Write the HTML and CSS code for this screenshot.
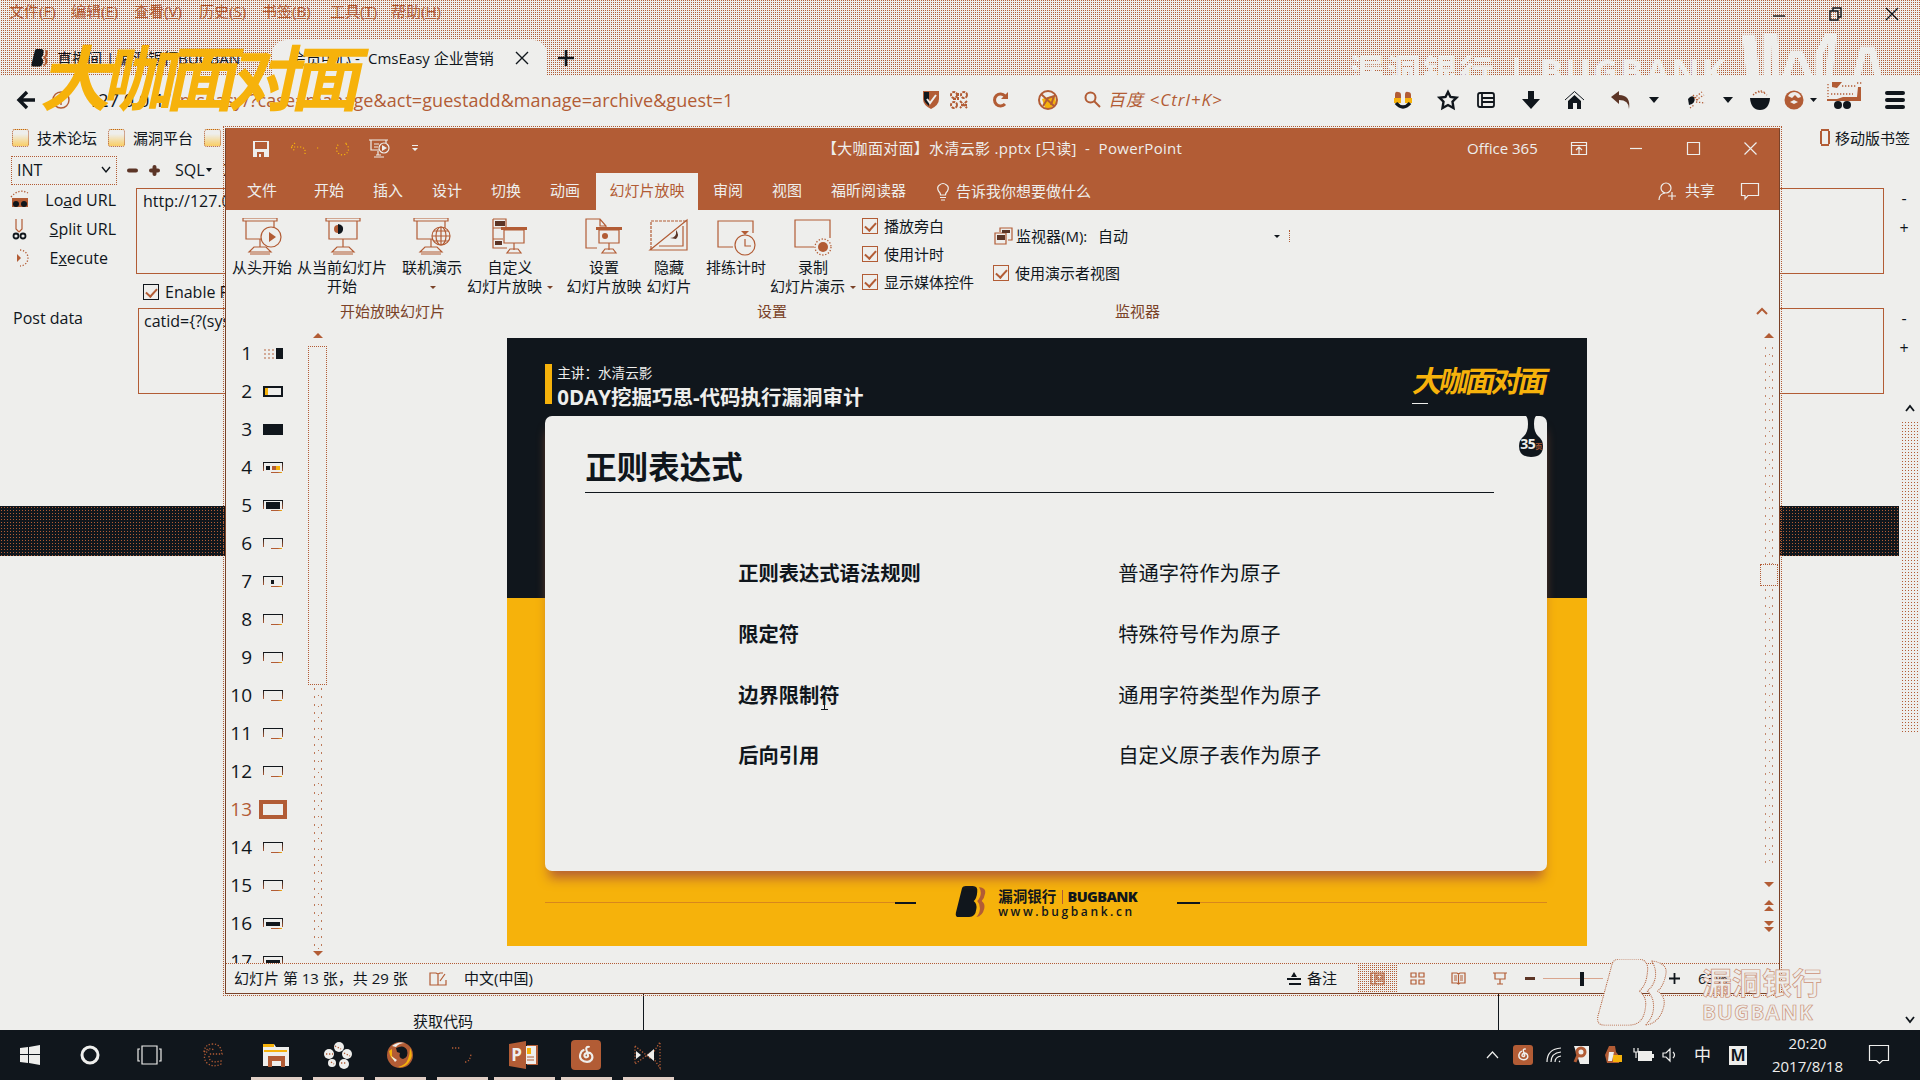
FILE: index.html
```html
<!DOCTYPE html>
<html lang="zh-CN">
<head>
<meta charset="utf-8">
<title>Desktop</title>
<link rel="stylesheet" href="styles.css">
</head>
<body>
<svg width="0" height="0" class="defs">
  <defs>
    <symbol id="board" viewBox="0 0 40 38"><path d="M1 0h34v3H1zM4 3v18h28V3M18 21v8M12 29h12l5 5H7zM8 36h20"/></symbol>
    <symbol id="clef" viewBox="0 0 20 20"><path d="M13 3c-2-1-4 0-3 3l1.500 5c.5 2-3.500 2.500-3.500 0 0-3 5-4 7-1 2 4-1 7-4.500 7C6 17 3 14 4 10c.5-2 2-4 4-4.500"/></symbol>
    <symbol id="bug" viewBox="0 0 36 36"><path class="front" d="M8 2q1-2 4-2h8q6 0 5 7-.5 7-4 10 4 3 3 9-1 9-8 9H4q-4 0-3-5z"/><path class="back" d="M27 1q8 1 7 7-1 6-4 9 4 3 3 8-2 9-9 10 4-4 4-10 0-5-3-8 4-4 4-9 0-4-2-7z"/></symbol>
  </defs>
</svg>

<main class="browser">
  <header class="chrome dither">
    <div class="menu"><span>文件(<u>F</u>)</span><span>编辑(<u>E</u>)</span><span>查看(<u>V</u>)</span><span>历史(<u>S</u>)</span><span>书签(<u>B</u>)</span><span>工具(<u>T</u>)</span><span>帮助(<u>H</u>)</span>
      <svg class="ln dark" width="14" height="14"><path d="M1 9h12"/></svg>
      <svg class="ln dark" width="14" height="14"><path d="M1 4h8v9H1zM4 4V1h8v9H9"/></svg>
      <svg class="ln dark" width="14" height="14"><path d="M1 1l12 12M13 1L1 13"/></svg>
    </div>
    <div class="browser-tabs">
      <div class="btab first"><svg class="bug" width="20" height="18"><use href="#bug"/></svg><span>直播间 | 漏洞银行BUGBAN</span></div>
      <div class="btab current"><span class="t1">会员中心 -</span><span class="t2">CmsEasy 企业营销</span><svg class="ln dark" width="14" height="14"><path d="M1 1l12 12M13 1L1 13"/></svg></div>
      <svg class="plus" width="16" height="16"><path d="M8 0v16M0 8h16"/></svg>
    </div>
  </header>

  <nav class="nav">
    <svg width="18" height="18"><path class="thick" d="M18 9H3M10 1L2 9l8 8"/></svg>
    <svg class="ln rust" width="20" height="20"><circle cx="10" cy="10" r="8"/><path d="M10 8v7M10 4v2"/></svg>
    <span class="url"><b>127.0.0.1</b>/cmseasy/?case=manage&amp;act=guestadd&amp;manage=archive&amp;guest=1</span>
    <svg width="18" height="18"><path class="frust" d="M1 0h16v8q0 6-8 10Q1 14 1 8z"/><path class="fdark" d="M2 1h5v14Q2 11 2 8z"/><path class="wt" d="M5 8l3 4 6-8"/></svg>
    <svg class="qr rust" width="18" height="18"><circle cx="4" cy="4" r="3"/><circle cx="14" cy="4" r="3"/><circle cx="4" cy="14" r="3"/><path d="M10 10l7 7M17 10l-7 7M8 2v6H2M11 14h6"/></svg>
    <svg width="16" height="16"><path class="rthick" d="M12 12a6 6 0 1 1 0-8"/><path class="frust" d="M15 0v7H8z"/></svg>
    <svg width="20" height="20"><circle class="bg" cx="10" cy="10" r="8"/><path class="fyel" d="M4 9l6-2 7-1 1 7-5 5H7z"/><circle class="r2" cx="10" cy="10" r="9"/><path class="r2" d="M3 4l13 12M5 16l5-8 6-2-3 9"/></svg>
    <svg class="r2" width="17" height="17"><circle cx="6.500" cy="6.500" r="5"/><path d="M10 10l6 6"/></svg>
    <i class="search">百度 &lt;Ctrl+K&gt;</i>
    <svg width="18" height="18"><path class="frust" d="M1 9V4q0-4 3-3 3 0 3 3v5M11 9V4q0-4 3-3 3 0 3 3v5"/><path class="fyel" d="M0 7h7v5H0zM11 7h7v5h-7z"/><path class="thick" d="M2 12q7 8 14 0"/></svg>
    <svg width="20" height="20"><path class="star" d="M10 2l2.500 5 6 .7-4 4 1 6.300-5.500-3-5.500 3 1-6.300-4-4 6-.7z"/></svg>
    <svg class="d2" width="18" height="18"><path d="M3 2h12q2 0 2 2v10q0 2-2 2H3q-2 0-2-2V4q0-2 2-2zM5 2v14M5 7h12M5 11h12"/></svg>
    <svg width="18" height="18"><path class="fdark" d="M6 0h6v8h6l-9 10L0 8h6z"/></svg>
    <svg width="19" height="18"><path class="d1" d="M0 9l9.500-8.500L19 9"/><path class="fdark" d="M3 10l6.500-6L16 10v8h-4v-6H8v6H3z"/></svg>
    <svg width="20" height="18"><path class="fmix" d="M0 6l8-6v4q12 0 10 14 0-9-10-9v4z"/></svg>
    <svg width="10" height="6"><path class="fdark" d="M0 0h10L5 6z"/></svg>
    <svg width="18" height="18"><path class="fdark" d="M1 8q3-4 6-2 2 4-2 7l-3 1z"/><path class="rdot" d="M7 7l8-6M9 9l8-5M9 11l9 1M3 17l4-3M6 4l5 5"/></svg>
    <svg width="10" height="6"><path class="fdark" d="M0 0h10L5 6z"/></svg>
    <svg width="20" height="20"><path class="fdark" d="M0 8h20q-1 12-10 12Q1 20 0 8z"/><path class="rdot" d="M3 5q7-6 14 0M5 3q6-4 10 0"/></svg>
    <svg width="20" height="20"><circle class="frust" cx="10" cy="10" r="9.500"/><path class="flight" d="M4 6q2-4 7-4 5 1 6 5l-3 1-3-3-3 3zM6 12l4-2 4 2-4 2z"/></svg>
    <svg class="small-caret" width="7" height="4"><path class="fdark" d="M0 0h7L3.500 4z"/></svg>
    <svg class="cart" width="36" height="26"><path class="frust" d="M0 17h10l6-2h14l1-10h3v14H0zM5 0h10l-5 6-5-1z"/><path class="rdot" d="M1 2v13M4 12h22M15 4h14M30 1h5"/><circle class="fdark" cx="11" cy="23" r="4"/><circle class="fdark" cx="20" cy="23" r="4"/></svg>
    <svg width="20" height="18"><path class="burger" d="M2 2h16M2 9h16M2 16h16"/></svg>
  </nav>

  <div class="bookmarks">
    <i class="folder"></i><span>技术论坛</span><i class="folder"></i><span>漏洞平台</span><i class="folder"></i>
    <svg class="phone" width="10" height="17"><path d="M1 1h8M1 16h8M1 2v13M9 2v13"/></svg><span>移动版书签</span>
  </div>

  <section class="hackbar">
    <div class="hack-tools"><div class="select"><span>INT</span><svg class="ln dark" width="10" height="6"><path d="M1 0l4 5 4-5"/></svg></div>
      <svg width="11" height="5"><path class="pill" d="M2 2.500h7"/></svg><svg width="11" height="11"><path class="pill" d="M2 5.500h7M5.500 2v7"/></svg><span>SQL</span><svg width="6" height="4"><path class="fdark" d="M0 0h6L3 4z"/></svg><span>X</span></div>
    <div class="hack-row">
      <div class="actions">
        <div class="action"><svg width="20" height="20"><path class="frust" d="M2 8h16v9H2z"/><path class="rdot" d="M1 7q8-9 17-4M2 10h16"/><circle class="fdark" cx="6" cy="14" r="3"/><circle class="fdark" cx="14" cy="14" r="3"/></svg><span>Lo<u>a</u>d URL</span></div>
        <div class="action"><svg width="20" height="22"><path class="r1" d="M6 1v10l3 3M12 1v10l-3 3"/><circle class="d2" cx="6" cy="18" r="2.500"/><circle class="d2" cx="13" cy="18" r="2.500"/></svg><span><u>S</u>plit URL</span></div>
        <div class="action"><svg width="20" height="18"><path class="frust" d="M7 5l4 4-4 4z"/><path class="rdot" d="M10 1a8 8 0 0 1 0 16"/></svg><span class="ex">E<u>x</u>ecute</span></div>
      </div>
      <div class="box">http://127.0.0.1</div>
      <div class="pm"><span>-</span><span>+</span></div>
    </div>
    <div class="enable"><i class="check"></i><span>Enable Post data</span></div>
    <div class="hack-row second">
      <div class="actions post">Post data</div>
      <div class="box">catid={?(system</div>
      <div class="pm"><span>-</span><span>+</span></div>
    </div>
  </section>

  <div class="page">
    <div class="page-body">
      <div class="banner"></div>
      <div class="page-foot"><span>获取代码</span><i></i></div>
    </div>
    <div class="page-scroll"><svg width="10" height="8"><path class="d2" d="M1 7l4-5 4 5"/></svg><i></i><svg width="10" height="8"><path class="d2" d="M1 1l4 5 4-5"/></svg></div>
  </div>
</main>

<div class="mark-top"><span>漏洞银行 | BUGBANK</span><svg width="150" height="42"><path d="M5 42L1 4h6l4 38M22 42V0h7l2 42M41 42l7-22h7l9 22M74 42V20l9-18h5l-4 40M112 42l6-26h9l6 26"/></svg></div>

<section class="ppt">
  <div class="titlebar">
    <svg width="16" height="16"><path class="flight" fill-rule="evenodd" d="M0 0h16v16H0zM2 1v7h12V1zM4 11v5h2v-3h2v3h3v-5z"/></svg>
    <svg class="ydot" width="17" height="14"><path d="M1 5h10q5 1 4 7M5 1L1 5l4 4"/></svg>
    <svg class="ydot" width="4" height="3"><path d="M0 1h3"/></svg>
    <svg class="ydot" width="15" height="16"><path d="M11 3a6 6 0 1 1-7 0M11 3V0"/></svg>
    <svg class="l1" width="21" height="19"><path d="M0 1h19M2 1v10h8M17 1v3M5 5h5M5 8h4M9 12v4M5 18h10M7 16h5"/><circle cx="15" cy="9" r="5"/><path class="flight" d="M13 6l5 3-5 3z"/></svg>
    <svg width="6" height="7"><path class="flight" d="M0 0h6v1H0zM0 3h6L3 6z"/></svg>
    <span class="doc">【大咖面对面】水清云影 .pptx [只读]&nbsp; -&nbsp; PowerPoint</span>
    <span class="office">Office 365</span>
    <svg class="l1" width="16" height="13"><path d="M.5.5h15v12H.5zM1 3.500h15M8 12V5M5 8l3-3 3 3"/></svg>
    <svg class="l1" width="13" height="13"><path d="M0 6.500h12"/></svg>
    <svg class="l1" width="13" height="13"><path d="M.5.5h12v12H.5z"/></svg>
    <svg class="l1" width="13" height="13"><path d="M.5.5l12 12M12.500.5l-12 12"/></svg>
  </div>
  <div class="ribbon-tabs">
    <span>文件</span><span>开始</span><span>插入</span><span>设计</span><span>切换</span><span>动画</span><span class="on">幻灯片放映</span><span>审阅</span><span>视图</span><span>福昕阅读器</span>
    <svg class="l1" width="12" height="18"><path d="M3.500 12q0-2-2-4-2-4 1-6 3.500-3 7 0 3 2 1 6-2 2-2 4zM3 14.500h6M4 17h4"/></svg>
    <span class="tell">告诉我你想要做什么</span>
    <svg class="l1" width="19" height="19"><circle cx="8" cy="6" r="5"/><path d="M1 18q0-6 6-7M14 10v8M10 14h8"/></svg>
    <span>共享</span>
    <svg class="l1" width="18" height="17"><path d="M.5.5h17v12H7L4 16v-3.500H.5z"/></svg>
  </div>

  <div class="ribbon">
    <div class="rb b1"><svg class="r1" width="40" height="38"><use href="#board"/><circle class="bg" cx="29" cy="19" r="10"/><path class="frust" d="M27 14l7 5-7 5z"/></svg><span>从头开始</span></div>
    <div class="rb b2"><svg class="r1" width="34" height="38"><use href="#board" width="40" height="38"/><circle class="frust" cx="13" cy="11" r="4"/><path class="fdark" d="M13 11V6q6 1 5 6-1 4-5 4z"/></svg><span>从当前幻灯片</span><span>开始</span></div>
    <div class="rb b3"><svg class="r1" width="38" height="38"><use href="#board" width="40" height="38"/><circle class="bg" cx="28" cy="18" r="9"/><path d="M19 18h18M28 9v18M21 13h14M21 23h14"/><ellipse cx="28" cy="18" rx="5" ry="9"/></svg><span>联机演示</span><span><i class="caret"></i></span></div>
    <div class="rb b4"><svg class="r1" width="36" height="38"><path d="M1 1h13v8M1 1v29h14M1 10h8M1 21h10"/><path class="fmix" d="M3 3h10v5H3zM3 23h7v4H3z"/><path class="frust" d="M9 9h26v3H9z"/><path class="bg" d="M12 12h20v13H12z"/><path d="M22 25v7M15 35h14l-3-4h-8z"/></svg><span>自定义</span><span>幻灯片放映 <i class="caret"></i></span></div>
    <div class="rb b5"><svg class="r1" width="38" height="38"><path d="M12 30H1V1h14l6 7v2M15 1v7h6"/><path class="frust" d="M11 9h26v3H11z"/><path class="bg" d="M14 12h20v13H14z"/><circle class="frust" cx="20" cy="18" r="3"/><path d="M24 25v7M17 35h14l-3-4h-8z"/></svg><span>设置</span><span>幻灯片放映</span></div>
    <div class="rb b6"><svg class="r1" width="38" height="38"><path stroke-dasharray="3 1" d="M1 31V3h36"/><path d="M0 32L37 2v30zM9 28h24V8"/><path class="fmix" d="M20 20q7 0 6-8 4 5 0 9z"/></svg><span>隐藏</span><span>幻灯片</span></div>
    <div class="rb b7"><svg class="r1" width="38" height="38"><path d="M16 29H1V3h35v12"/><circle class="bg" cx="28" cy="27" r="10"/><path d="M28 21v7h6"/><path class="frust" d="M24 13h8l-4 4z"/></svg><span>排练计时</span></div>
    <div class="rb b8"><svg class="r1" width="38" height="38"><path d="M20 29H1V2h35v18"/><circle class="rdot" cx="29" cy="29" r="8"/><circle class="frust" cx="29" cy="29" r="5"/></svg><span>录制</span><span>幻灯片演示 <i class="caret"></i></span></div>
    <div class="checks"><label><i class="check r"></i>播放旁白</label><label><i class="check r"></i>使用计时</label><label><i class="check r"></i>显示媒体控件</label></div>
    <div class="monitors"><div><svg class="r1" width="19" height="18"><path d="M6 5V1h12v12h-4M1 6h11v11H1z"/><path class="fmix" d="M3 8h8v5H3zM8 3h8v3H8z"/></svg><span class="ml">监视器(M):</span><span class="auto">自动</span><i class="caret k"></i><em></em></div><label><i class="check r"></i>使用演示者视图</label></div>
    <div class="groups"><span>开始放映幻灯片</span><span>设置</span><span>监视器</span><svg class="r2" width="12" height="8"><path d="M1 7l5-5 5 5"/></svg></div>
  </div>

  <div class="work">
    <ol class="thumbs">
      <li>1<i class="th a"></i></li><li>2<i class="th b"></i></li><li>3<i class="th c"></i></li><li>4<i class="th d"></i></li><li>5<i class="th e"></i></li><li>6<i class="th"></i></li><li>7<i class="th g"></i></li><li>8<i class="th"></i></li><li>9<i class="th"></i></li><li>10<i class="th"></i></li><li>11<i class="th"></i></li><li>12<i class="th"></i></li><li class="sel">13<i class="th"></i></li><li>14<i class="th"></i></li><li>15<i class="th"></i></li><li>16<i class="th h"></i></li><li>17<i class="th h"></i></li>
    </ol>
    <div class="tscroll"><svg width="10" height="5"><path class="frust" d="M0 5h10L5 0z"/></svg><i></i><b class="noise"></b><svg width="10" height="5"><path class="frust" d="M0 0h10L5 5z"/></svg></div>

    <article class="slide">
      <div class="slide-head">
        <div class="speaker"><p>主讲<span class="mid">：</span>水清云影</p><h2>0DAY挖掘巧思-代码执行漏洞审计</h2></div>
        <div class="slogo"><span>大咖面对面</span><i></i></div>
      </div>
      <div class="card">
        <div class="drop"><svg width="24" height="42"><path class="fdark" d="M7 0h10q-2 2-2 8 0 8 4 12 5 4 5 10 0 11-12 11T0 30q0-6 5-10 4-4 4-12 0-6-2-8z"/></svg><span>35<small>页</small></span></div>
        <h1>正则表达式</h1>
        <div class="points">
          <b>正则表达式语法规则</b><span>普通字符作为原子</span>
          <b>限定符</b><span>特殊符号作为原子</span>
          <b>边界限制符</b><span>通用字符类型作为原子</span>
          <b>后向引用</b><span>自定义原子表作为原子</span>
        </div>
        <svg class="ibeam d1" width="9" height="16"><path d="M1 .5h7M4.500 1v14M1 15.500h7"/></svg>
      </div>
      <div class="slide-foot">
        <i class="rule l"></i>
        <svg class="bug" width="36" height="32"><use href="#bug"/></svg>
        <div class="brand"><p>漏洞银行<em></em><b>BUGBANK</b></p><p class="www">www.bugbank.cn</p></div>
        <i class="rule rr"></i>
      </div>
    </article>

    <div class="vscroll"><svg width="10" height="5"><path class="frust" d="M0 5h10L5 0z"/></svg><b class="noise"></b><i></i><b class="noise n2"></b><svg width="10" height="50"><path class="frust" d="M0 0h10L5 5zM0 23l5-5 5 5zM0 29l5-5 5 5zM0 39h10l-5 5zM0 45h10l-5 5z"/></svg></div>
  </div>

  <footer class="status">
    <span class="count">幻灯片 第 13 张<span class="mid">，</span>共 29 张</span>
    <svg class="r1" width="18" height="14"><path d="M9 2v11H1V1h6l2 1 2-1h3M9 13h8V8M11 9l5-7"/></svg>
    <span class="lang">中文(中国)</span>
    <svg class="d2" width="14" height="13"><path class="fdark" d="M4 5h6L7 0z" stroke="none"/><path d="M0 7h14M2 12h12"/></svg>
    <span class="notes">备注</span>
    <div class="normal dither"><svg class="r1" width="15" height="13"><path d="M1 1h13v11H1zM5 1v11M7 3h5v4H7zM7 9h6"/></svg></div>
    <svg class="r1" width="15" height="13"><path d="M1 1h5v4H1zM9 1h5v4H9zM1 8h5v4H1zM9 8h5v4H9z"/></svg>
    <svg class="r1" width="15" height="13"><path d="M7.500 2v10M1 1h5l1.500 1L9 1h5v10H9l-1.500 1L6 11H1zM3 4h3M3 6h3M3 8h3M9 4h3M9 6h3M9 8h3"/></svg>
    <svg class="r1" width="14" height="13"><path d="M0 1h14M2 1v6h10V1M7 7v5M4 12h6"/></svg>
    <svg width="10" height="3"><path class="fmix" d="M0 0h10v3H0z"/></svg>
    <div class="slider"><i></i></div>
    <svg class="d2" width="11" height="11"><path d="M5.500 0v11M0 5.500h11"/></svg>
    <span class="zoom">63%</span>
  </footer>
</section>

<div class="mark-left">大咖面对面</div>
<div class="mark-bug"><svg width="74" height="68" viewBox="0 0 36 36" preserveAspectRatio="none"><use href="#bug"/></svg><div><p>漏洞银行</p><p class="en">BUGBANK</p></div></div>

<footer class="taskbar">
  <div><svg width="20" height="20"><path class="flight" d="M0 3l8-1v7H0zM9 2l11-2v9H9zM0 10h8v8l-8-1zM9 10h11v10L9 18z"/></svg></div>
  <div><svg width="20" height="20"><circle class="ring" cx="10" cy="10" r="8"/></svg></div>
  <div><svg class="l1" width="26" height="20"><path d="M5 1h15v18H5zM3 4H1v12h2M22 4h2v12h-2"/></svg></div>
  <div class="edge"><svg class="rdot" width="22" height="26"><path d="M2 10Q3 2 11 2t9 10H7M2 10q5-5 10-2M7 14q0 8 12 5v3q-8 4-14-1-6-7 2-13"/></svg></div>
  <div class="run"><svg width="28" height="26"><path class="flight" d="M1 2h11l2 3h13v19H1z"/><path class="fyel" d="M1 2h11v3H1zM2 8h23v2H2z"/><path class="frust" d="M6 14h17v11h-4v-6h-9v6H6z"/></svg></div>
  <div class="run"><svg width="30" height="28"><g class="flight"><circle cx="16" cy="6" r="5"/><circle cx="6" cy="13" r="5"/><circle cx="24" cy="13" r="5"/><circle cx="9" cy="22" r="4"/><circle cx="21" cy="23" r="5"/></g><path class="rdot" d="M12 5l6 3M3 13h7M21 12l6 3M8 21l3 2M18 22h6"/></svg></div>
  <div class="run"><svg width="28" height="28"><circle class="frust" cx="14" cy="14" r="13"/><path class="fyel" d="M24 7q4 8-1 14-4 6-11 5 8-2 10-8 2-5 2-11zM3 10l3-2v7l4 5q-6-2-7-10z"/><path class="fdark" d="M10 7q8-4 11 2 2 7-4 9-5-1-3-6l-3-1z"/><path class="flight" d="M6 5q6-5 13-3-6 0-9 4zM5 15l6 4-2 2z"/></svg></div>
  <div class="run"><svg class="rdot" width="26" height="22"><path d="M3 4h8M16 18q5 0 6-8"/></svg></div>
  <div class="run wide"><svg width="30" height="28"><path class="frust" d="M0 3l17-3v28L0 25zM18 4h11v20H18z"/><path class="flight" d="M17 5h10v18H17z"/><path class="fyel" d="M18 7h4v6h-4z"/><path class="r1" d="M18 16h7M18 19h7"/></svg><b>P</b></div>
  <div class="run"><svg width="30" height="30"><rect class="frust" width="30" height="30" rx="4"/><use class="clef" href="#clef" x="5" y="4" width="21" height="21"/></svg></div>
  <div class="run"><svg width="28" height="28"><path class="rdot" d="M1 5l15 12L26 1v26L16 12 1 23z"/><path class="flight" d="M2 10l5 4-5 4zM13 14l7-6v12z"/></svg></div>
  <div class="tray">
    <svg class="l1" width="13" height="8"><path d="M1 7l5.500-6L12 7"/></svg>
    <svg width="20" height="20"><rect class="frust" width="20" height="20" rx="3"/><use class="clef" href="#clef" x="3" y="2" width="15" height="15"/></svg>
    <svg class="l1" width="16" height="16"><path d="M1 15Q1 2 15 1M5 15Q5 6 15 5M9 15q0-5 6-6M13 15l1-1"/></svg>
    <svg width="16" height="18"><path class="flight" d="M0 0h15v18H6z"/><circle class="r3" cx="7" cy="6" r="4"/><path class="r3" d="M4 9l-3 7"/></svg>
    <svg width="18" height="18"><path class="frust" d="M4 0h6l1 6 4 5-1 6H2L0 9z"/><path class="fyel" d="M8 9h9v7H8z"/><path class="flight" d="M4 6h5L7 15H3z"/></svg>
    <svg width="21" height="15"><path class="flight" d="M5 3h14v10H5zM19 6h2v4h-2z"/><path class="l1" d="M1 0v4h4V0M3 4v6"/></svg>
    <svg class="l1" width="15" height="14"><path d="M1 5h3l4-4v12L4 9H1zM11 4q3 3 0 6"/></svg>
    <span class="ime">中</span>
    <b class="m">M</b>
    <div class="clock"><span>20:20</span><span>2017/8/18</span></div>
    <svg class="l1" width="21" height="20"><path d="M.5.5h19v15h-6l-3 3-3-3h-7z"/></svg>
  </div>
</footer>
</body>
</html>
```
FILE: styles.css
```css
:root { --bg: #eeeeec; --rust: #b25c35; --ink: #10161c; --gold: #f6b20b; }
* { box-sizing: border-box; }
body { margin: 0; width: 1920px; height: 1080px; overflow: hidden; position: relative; background: var(--bg); color: var(--ink); font-family: "Open Sans", "Noto Sans CJK SC", sans-serif; font-size: 15px; line-height: 20px; white-space: nowrap; }
svg { display: block; flex: none; overflow: visible; }
p, h1, h2, ol { margin: 0; padding: 0; list-style: none; }
i.search { font-style: italic; }
.defs { position: absolute; }
.mid { font-family: "Noto Sans CJK TC", sans-serif; }
.dither { background-image: conic-gradient(var(--rust) 25%, transparent 0); background-size: 2px 2px; }

/* stroke and fill helpers */
.ln, .l1, .r1, .r2, .d1, .d2, .r3, .rdot, .ydot, .thick, .rthick, .wt, .ring { fill: none; }
.ln { stroke-width: 1.4; } .ln.dark { stroke: var(--ink); } .ln.rust { stroke: var(--rust); }
.l1 { stroke: var(--bg); stroke-width: 1.2; }
.r1 { stroke: var(--rust); stroke-width: 1.2; } .r2 { stroke: var(--rust); stroke-width: 2; } .r3 { stroke: var(--rust); stroke-width: 3; }
.d1 { stroke: var(--ink); stroke-width: 1; } .d2 { stroke: var(--ink); stroke-width: 1.8; }
.rdot { stroke: var(--rust); stroke-width: 1.3; stroke-dasharray: 1.3 1.7; }
.ydot { stroke: var(--gold); stroke-width: 1.2; stroke-dasharray: 1.2 1.8; }
.thick { stroke: var(--ink); stroke-width: 3.4; } .rthick { stroke: var(--rust); stroke-width: 3; }
.wt { stroke: var(--bg); stroke-width: 2; }
.fdark { fill: var(--ink); stroke: none; } .frust { fill: var(--rust); stroke: none; } .fyel { fill: var(--gold); stroke: none; }
.flight { fill: var(--bg); stroke: none; } .fmix { fill: #5c3526; stroke: none; } .bg { fill: var(--bg); }
.star { fill: none; stroke: var(--ink); stroke-width: 2.4; } .burger { stroke: var(--ink); stroke-width: 4; stroke-linecap: round; }
.pill { stroke: #5c3526; stroke-width: 4; stroke-linecap: round; } .ring { stroke: var(--bg); stroke-width: 3; }
.clef { fill: none; stroke: var(--bg); stroke-width: 2; }
.qr { fill: none; stroke: var(--rust); stroke-width: 2; stroke-dasharray: 3 1; }
.bug { fill: var(--ink); }
#bug .back { fill: var(--back, var(--rust)); }

/* browser */
.browser { height: 1030px; display: flex; flex-direction: column; }
.chrome { height: 76px; flex: none; display: flex; flex-direction: column; }
.menu { height: 36px; padding: 0 0 8px 9px; color: var(--rust); display: grid; align-items: center; grid-template-columns: 62px 63px 65px 63px 68px 61px 1381px 57px 56px auto; }
.menu span { padding-bottom: 6px; }
.browser-tabs { height: 40px; display: flex; align-items: flex-end; }
.btab { height: 36px; display: flex; align-items: center; }
.btab.first { width: 272px; padding-left: 30px; gap: 7px; }
.btab.current { width: 275px; background: var(--bg); border-radius: 14px 14px 0 0; padding-left: 19px; }
.t1 { width: 77px; } .t2 { width: 147px; }
.plus { align-self: center; margin-left: 11px; margin-top: 3px; stroke: var(--ink); stroke-width: 2.6; }
.nav { height: 47px; padding: 0 0 0 17px; display: grid; align-items: center; grid-template-columns: 34px 37px 834px 28px 43px 45px 46px 26px 284px 44px 39px 45px 43px 46px 38px 38px 36px 27px 34px 26px 17px 58px auto; }
.url { font-size: 18px; color: var(--rust); letter-spacing: 0.06px; } .url b { font-weight: 400; color: var(--ink); }
.search { font-size: 17px; color: var(--rust); letter-spacing: 1px; margin-left: -2px; }
.cart { margin-top: -10px; }
.bookmarks { height: 29px; flex: none; padding-left: 12px; display: grid; align-items: center; grid-template-columns: 25px 71px 25px 71px 1616px 15px auto; }
.folder { width: 17px; height: 18px; border: 1px dotted var(--rust); border-radius: 3px; background: linear-gradient(transparent 25%, #f8cf6c 95%); }
.phone { fill: none; stroke: var(--rust); stroke-width: 2; }
.hackbar { font-size: 16px; flex: none; height: 354px; }
.hack-tools { height: 36px; display: flex; align-items: center; padding-left: 11px; }
.select { width: 106px; height: 29px; border: 1px dotted var(--rust); display: flex; align-items: center; justify-content: space-between; padding: 0 5px; }
.hack-tools > svg:nth-of-type(1) { margin: 0 11px 0 10px; } .hack-tools > svg:nth-of-type(2) { margin-right: 15px; } .hack-tools > span:last-child { margin-left: 12px; }
.hack-tools > svg:nth-of-type(3) { margin-left: 1px; }
.hack-row { display: grid; grid-template-columns: 136px 1748px 36px; height: 86px; }
.hack-row.second { grid-template-columns: 138px 1746px 36px; }
.actions { display: grid; grid-auto-rows: 29px; padding: 0 20px 0 10px; margin-top: -3px; }
.action { display: flex; align-items: center; justify-content: space-between; } .action .ex { margin-right: 8px; }
.post { padding: 0 0 0 13px; margin: 0; grid-auto-rows: 20px; }
.box { border: 1px solid var(--rust); padding: 2px 6px; } .second .box { padding-left: 5px; }
.pm { text-align: center; display: grid; grid-template-rows: 30px 30px; padding-top: 0; margin-left: 4px; }
.enable { height: 34px; display: flex; align-items: center; gap: 6px; padding: 4px 0 2px 143px; }
.check { width: 16px; height: 16px; border: 1px solid var(--ink); display: inline-flex; align-items: center; justify-content: center; }
.check::after { content: ""; width: 9px; height: 5px; border: solid var(--rust); border-width: 0 0 2px 2px; transform: translateY(-1px) rotate(-48deg); }
.check.r { border-color: var(--rust); }
.page { flex: 1; display: flex; margin-top: -112px; padding-top: 112px; }
.page-body { flex: 1; display: flex; flex-direction: column; justify-content: space-between; }
.banner { height: 50px; width: 1899px; background: radial-gradient(var(--rust) 0.7px, transparent 0.8px) 0 0 / 3px 3px, var(--ink); }
.page-foot { height: 38px; display: flex; padding-left: 413px; }
.page-foot span { width: 230px; padding-top: 19px; } .page-foot i { width: 856px; border: solid var(--ink); border-width: 0 1px; }
.page-scroll { width: 21px; margin-top: -102px; display: flex; flex-direction: column; align-items: center; padding-bottom: 6px; }
.page-scroll i { width: 18px; height: 312px; margin: 9px 0 auto; background: radial-gradient(var(--rust) 0.8px, transparent 1px) 0 0 / 3px 3px; }

/* watermarks laid over the desktop */
.mark-top { position: absolute; left: 1350px; top: 34px; height: 42px; width: 560px; overflow: hidden; display: flex; color: var(--bg); }
.mark-top span { font-size: 34px; font-weight: 700; line-height: 44px; padding-top: 15px; width: 395px; letter-spacing: 2.5px; }
.mark-top svg { fill: none; stroke: var(--bg); stroke-width: 7; }
.mark-left { position: absolute; left: 45px; top: 35px; font-size: 71px; line-height: 86px; font-weight: 700; color: var(--gold); letter-spacing: -8.5px; transform: skewX(-12deg); }
.mark-bug { position: absolute; left: 1596px; top: 959px; display: flex; gap: 32px; color: var(--bg); }
.mark-bug svg { fill: var(--bg); stroke: var(--rust); stroke-width: 0.5; stroke-dasharray: 0.5 0.5; --back: var(--bg); }
.mark-bug p { font-size: 30px; line-height: 32px; font-weight: 700; padding-top: 8px; -webkit-text-stroke: 0.7px #cc9278; }
.mark-bug .en { font-size: 21px; line-height: 22px; padding-top: 2px; letter-spacing: 1px; }

/* presentation window */
.ppt { position: absolute; left: 225px; top: 128px; width: 1555px; height: 866px; background: var(--bg); border: 1px solid #7a4228; border-top: 1px solid var(--rust); display: flex; flex-direction: column; outline: 1px dotted var(--rust); outline-offset: 1px; }
.titlebar { height: 44px; background: var(--rust); color: var(--bg); padding: 0 0 5px 27px; display: grid; align-items: center; grid-template-columns: 37px 27px 18px 34px 43px 418px 637px 104px 59px 57px 57px auto; }
.titlebar span { margin-top: -2px; } .doc { margin-left: -8px; letter-spacing: 0.3px; }
.ribbon-tabs { height: 37px; background: var(--rust); color: var(--bg); padding-left: 21px; display: grid; align-items: center; grid-template-columns: 67px 59px 59px 59px 59px 46px 117px 59px 59px 106px 19px 702px 27px 56px auto; }
.ribbon-tabs span { margin-top: -3px; } .ribbon-tabs .tell { margin-top: -1px; }
.ribbon-tabs .on { width: 102px; height: 37px; line-height: 34px; text-align: center; background: var(--bg); color: var(--rust); margin: 0 0 0 0; }
.ribbon { height: 121px; padding-left: 2px; display: grid; grid-template-columns: 68px 92px 88px 68px 10px 100px 30px 104px 50px 24px 131px auto; grid-template-rows: 91px 30px; }
.rb { display: flex; flex-direction: column; align-items: center; padding-top: 8px; line-height: 19px; }
.rb svg { margin-bottom: 2px; } .b5 { grid-column: 6; } .checks { grid-column: 11; }
.caret { display: inline-block; vertical-align: middle; border: 3px solid transparent; border-top: 3px solid #7a4228; border-bottom: 0; margin-left: 1px; }
.caret.k { border-top-color: var(--ink); margin-left: 146px; }
.monitors em { width: 1px; height: 12px; border-left: 1px dotted var(--rust); margin-left: 9px; }
.checks { display: grid; grid-auto-rows: 28px; padding-top: 2px; } label { display: flex; align-items: center; gap: 6px; }
.monitors > div { display: flex; align-items: center; height: 36px; margin: 8px 0 1px 1px; } .ml { width: 82px; margin-left: 3px; } .auto { width: 30px; }
.monitors label { height: 36px; }
.groups { grid-column: 1 / -1; grid-row: 2; display: grid; grid-template-columns: 417px 358px 641px auto; padding: 0 0 10px 112px; align-items: center; color: #7a4228; }
.work { flex: 1; min-height: 0; display: flex; }
.thumbs { width: 83px; height: 632px; overflow: hidden; padding-top: 3px; font-size: 19px; }
.thumbs li { height: 38px; width: 62px; display: grid; grid-template-columns: 26px 28px; gap: 7px; align-items: center; justify-items: end; text-align: right; }
.thumbs .sel { color: var(--rust); }
.th { width: 28px; height: 19px; border: 4px solid transparent; background: linear-gradient(var(--ink), var(--ink)) 0 0 / 20px 1px no-repeat content-box, linear-gradient(var(--ink), var(--rust)) 0 0 / 1px 9px no-repeat content-box, linear-gradient(var(--ink), var(--rust)) 100% 0 / 1px 9px no-repeat content-box, linear-gradient(90deg, var(--rust) 60%, var(--gold)) 8px 100% / 11px 1px no-repeat content-box; }
.sel .th { border-color: var(--rust); outline: 1px solid var(--bg); outline-offset: -5px; }
.th.a { background: linear-gradient(90deg, transparent 13px, var(--ink) 0) content-box, radial-gradient(var(--rust) 0.6px, transparent 0.8px) 0 0 / 4px 4px content-box; }
.th.b { background: linear-gradient(90deg, var(--gold) 5px, transparent 0) content-box; box-shadow: inset 0 0 0 2px var(--ink); border-width: 0; width: 20px; height: 11px; margin-right: 4px; }
.th.c { background: var(--ink) content-box; }
.th.d::after, .th.e::after, .th.g::after, .th.h::after { content: ""; display: block; height: 4px; margin: 4px 3px; background: var(--ink); }
.th.d::after { background: linear-gradient(90deg, var(--ink) 4px, transparent 0 6px, var(--rust) 0 10px, var(--gold) 0); } .th.e::after { height: 7px; margin: 2px 3px; } .th.g::after { width: 3px; margin-left: 8px; }
.tscroll { width: 19px; display: flex; flex-direction: column; align-items: center; padding: 2px 0 5px; height: 630px; }
.tscroll i { width: 19px; height: 339px; border: 1px dotted var(--rust); margin-top: 8px; }
.noise { flex: 1; width: 14px; background: radial-gradient(var(--rust) 0.6px, transparent 0.7px) 0 0 / 7px 8px, radial-gradient(var(--rust) 0.6px, transparent 0.7px) 3px 5px / 9px 11px; opacity: 0.8; }
.slide { width: 1080px; height: 608px; margin: 7px 0 0 180px; background: linear-gradient(var(--ink) 260px, var(--gold) 0); color: var(--bg); padding: 0 40px 0 38px; display: flex; flex-direction: column; flex: none; }
.slide-head { height: 78px; display: flex; justify-content: space-between; padding-top: 26px; }
.speaker { border-left: 7px solid var(--gold); height: 40px; padding-left: 5px; } .speaker p { font-size: 13.6px; line-height: 17px; } .speaker h2 { font-size: 20.500px; line-height: 32px; }
.slogo { width: 134px; color: var(--gold); font-size: 29.500px; line-height: 33px; font-weight: 700; letter-spacing: -3.200px; padding-left: 1px; } .slogo span { display: block; transform: skewX(-12deg); } .slogo i { display: block; width: 16px; height: 1px; background: var(--bg); margin: 6px 0 0 -2px; }
.card { position: relative; height: 455px; border-radius: 7px; background: var(--bg); color: var(--ink); box-shadow: 0 11px 12px -4px rgba(178, 92, 53, 0.95); padding: 29px 53px 0 40px; }
.card h1 { font-size: 31.500px; line-height: 43px; padding-bottom: 4px; border-bottom: 1px solid var(--ink); }
.points { display: grid; grid-template-columns: 380px auto; grid-auto-rows: 60.700px; align-items: center; padding: 50px 0 0 153px; font-size: 20.300px; line-height: 26px; }
.drop { position: absolute; right: 4px; top: 0; color: var(--bg); }
.drop span { position: absolute; left: 1px; top: 18px; font-weight: 700; font-size: 14px; letter-spacing: -0.5px; } .drop small { font-size: 7px; color: var(--rust); }
.ibeam { position: absolute; left: 275px; top: 278px; }
.slide-foot { flex: 1; display: flex; align-items: flex-start; padding-top: 15px; }
.rule { height: 2px; margin-top: 16px; } .rule.l { width: 371px; background: linear-gradient(var(--ink), var(--ink)) 100% 0 / 21px 2px no-repeat, linear-gradient(#d8871d, #d8871d) 0 0 / 350px 1px no-repeat; }
.rule.rr { width: 370px; margin-left: 40px; background: linear-gradient(var(--ink), var(--ink)) 0 0 / 23px 2px no-repeat, linear-gradient(#d8871d, #d8871d) 100% 0 / 347px 1px no-repeat; }
.slide-foot .bug { margin-left: 37px; }
.brand { color: var(--ink); width: 139px; margin-left: 9px; font-weight: 700; } .brand p { font-size: 14.500px; line-height: 22px; display: flex; align-items: center; } .brand em { width: 1px; height: 14px; background: var(--rust); margin: 0 5px 0 6px; }
.brand b { letter-spacing: -0.6px; } .brand .www { font-size: 12px; line-height: 8px; letter-spacing: 2.6px; font-weight: 600; }
.vscroll { width: 20px; margin-left: 172px; padding: 2px 0 0; display: flex; flex-direction: column; align-items: center; height: 606px; }
.vscroll .noise { flex: none; height: 220px; margin-top: 6px; opacity: 0.7; } .vscroll i { width: 18px; height: 22px; border: 1px dotted var(--rust); } .vscroll .n2 { height: 280px; margin: 0 0 16px; }
.status { height: 30px; border-top: 1px dotted var(--rust); display: grid; align-items: center; padding-left: 8px; grid-template-columns: 195px 35px 823px 20px 50px 53px 41px 42px 32px 18px 126px 29px auto; }
.status > span { margin-top: -2px; }
.normal { width: 40px; height: 28px; display: grid; place-items: center; }
.slider { width: 60px; height: 14px; display: grid; place-items: center start; background: linear-gradient(#d9a58e, #d9a58e) 0 50% / 100% 1px no-repeat; } .slider i { width: 4px; height: 14px; margin-left: 37px; background: var(--ink); }

/* taskbar */
.taskbar { height: 50px; background: var(--ink); color: var(--bg); display: grid; grid-template-columns: 60px 60px 60px 66px 61px 62px 62px 57px 67px 62px 62px auto; }
.taskbar > div { display: grid; place-items: center; padding-bottom: 1px; }
.taskbar > .run { width: 51px; border-bottom: 3px solid #e0cfc6; margin-left: 5px; padding: 3px 2px 0 0; }
.taskbar > .run:nth-child(n+6) { margin-left: 6px; } .taskbar > .run.wide { width: 61px; grid-template: 1fr / 1fr; margin-left: 6px; } .run.wide > * { grid-area: 1 / 1; } .run.wide b { margin-right: 14px; font-size: 17px; }
.taskbar > .tray { grid-column: 12; justify-self: end; width: 434px; display: grid; place-items: center start; grid-template-columns: 27px 33px 28px 31px 28px 29px 31px 36px 41px 99px auto; padding: 0; }
.ime { font-size: 17px; margin-left: 1px; } .m { width: 18px; background: var(--bg); color: var(--ink); text-align: center; line-height: 19px; font-size: 16px; }
.clock { width: 75px; display: grid; justify-items: center; line-height: 23px; font-size: 15px; }
```
